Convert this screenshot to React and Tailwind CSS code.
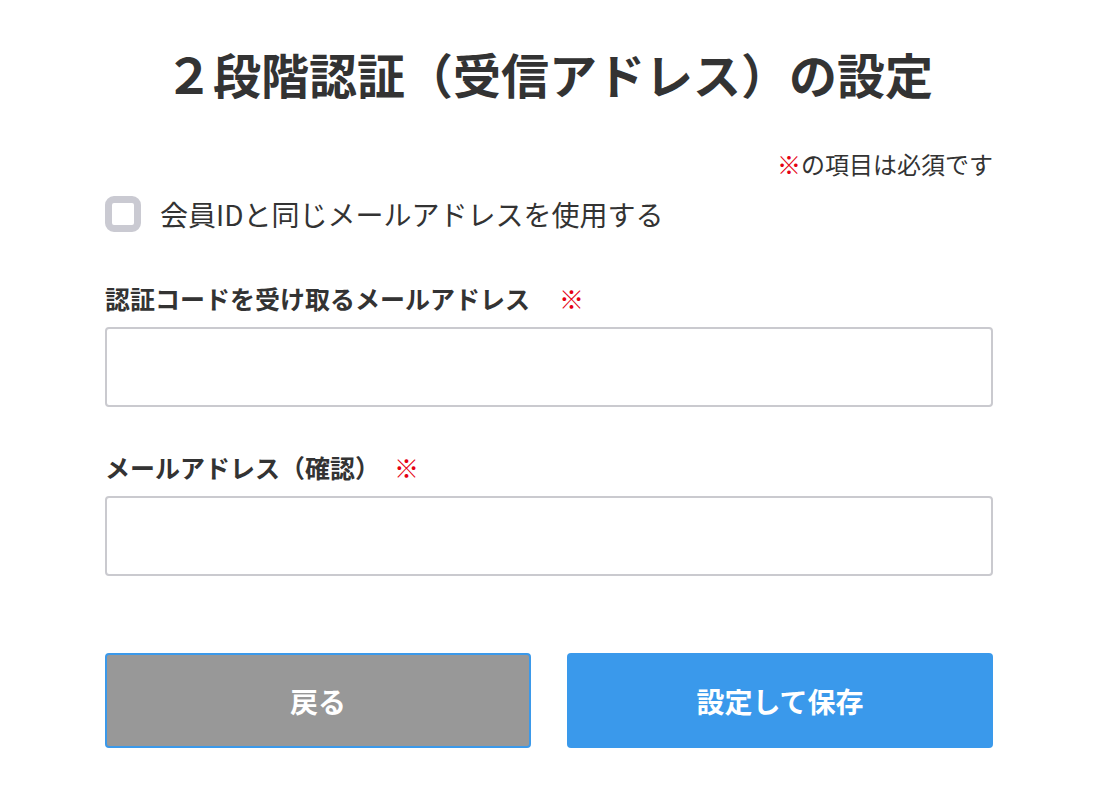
import { useState } from "react";

const App = () => {
    const [useSame, setUseSame] = useState(false);
    const [email, setEmail] = useState("");
    const [emailConfirm, setEmailConfirm] = useState("");

    return (
        <div
            className="w-full min-h-[798px] bg-white text-[#333333]"
            style={{ fontFamily: '"Noto Sans CJK JP", "Noto Sans", sans-serif' }}
        >
            <div className="w-[888px] mx-auto flex flex-col">
                <h1 className="mt-[37px] text-center text-[48px] leading-[72px] font-bold">
                    ２段階認証（受信アドレス）の設定
                </h1>

                <p className="mt-[39px] text-right text-[24px] leading-[32px]">
                    <span className="text-[#e50012]">※</span>の項目は必須です
                </p>

                <label className="mt-[16px] flex items-center cursor-pointer">
                    <input
                        type="checkbox"
                        className="sr-only"
                        checked={useSame}
                        onChange={(e) => setUseSame(e.target.checked)}
                    />
                    <span className="w-[36px] h-[36px] rounded-[9px] border-[7px] border-solid border-[#cacad2] bg-white" />
                    <span className="ml-[19px] text-[28px] leading-[36px]">
                        会員IDと同じメールアドレスを使用する
                    </span>
                </label>

                <div className="mt-[49px] text-[25px] leading-[34px] font-bold">
                    認証コードを受け取るメールアドレス
                    <span className="ml-[29px] font-normal text-[#e50012]">※</span>
                </div>
                <input
                    type="email"
                    value={email}
                    onChange={(e) => setEmail(e.target.value)}
                    className="mt-[12px] w-full h-[80px] px-4 rounded-[4px] border-2 border-solid border-[#cacacf] text-[24px] outline-none"
                />

                <div className="mt-[43px] text-[25px] leading-[34px] font-bold">
                    メールアドレス（確認）
                    <span className="ml-[14px] font-normal text-[#e50012]">※</span>
                </div>
                <input
                    type="email"
                    value={emailConfirm}
                    onChange={(e) => setEmailConfirm(e.target.value)}
                    className="mt-[12px] w-full h-[80px] px-4 rounded-[4px] border-2 border-solid border-[#cacacf] text-[24px] outline-none"
                />

                <div className="mt-[77px] grid grid-cols-2 gap-[36px]">
                    <button className="h-[95px] rounded-[4px] border-2 border-solid border-[#3b99ea] bg-[#989898] text-white text-[28px] font-bold">
                        戻る
                    </button>
                    <button className="h-[95px] rounded-[4px] bg-[#3a99eb] text-white text-[28px] font-bold">
                        設定して保存
                    </button>
                </div>
            </div>
        </div>
    );
};

export default App;
